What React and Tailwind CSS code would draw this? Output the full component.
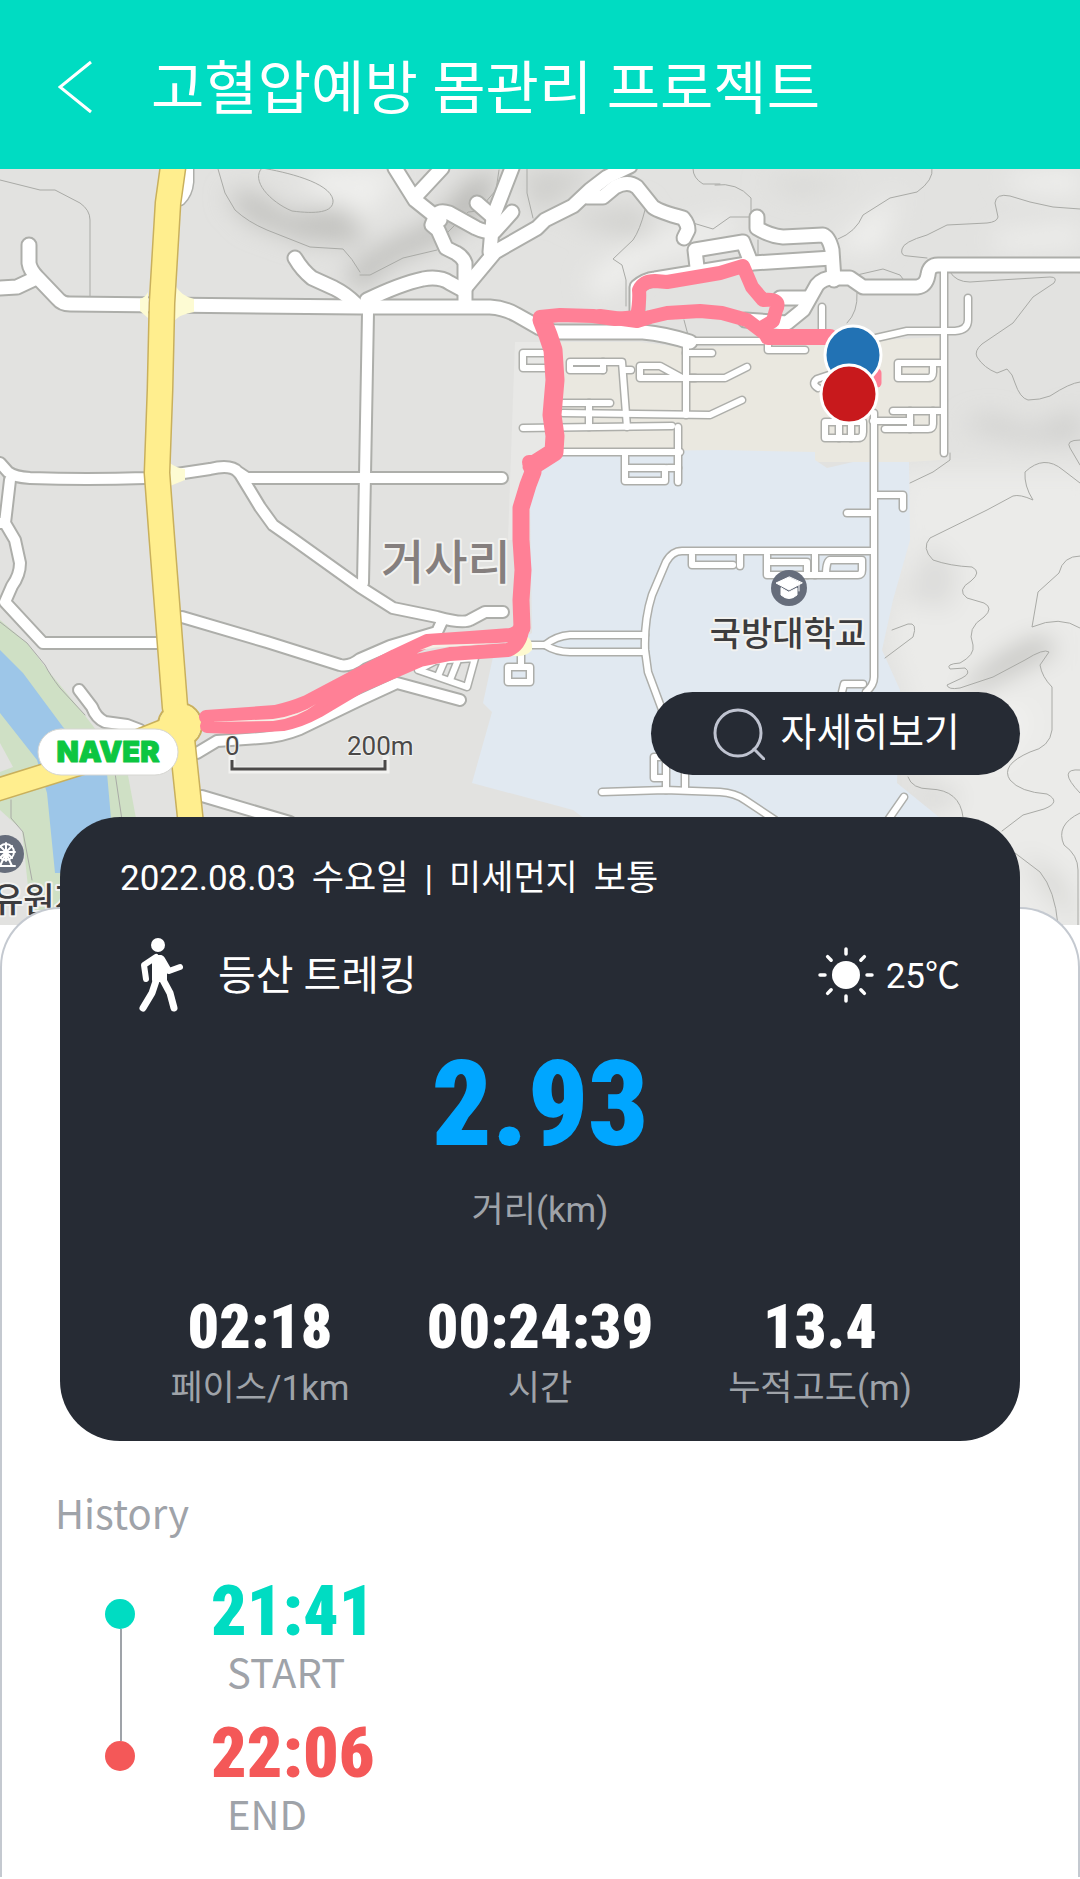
import React from 'react';

const STATS = [
  { value: '02:18', label: '페이스/1km' },
  { value: '00:24:39', label: '시간' },
  { value: '13.4', label: '누적고도(m)' },
];

// Wide streets
const STREETS = [
  'M0 288L17 287L34 279',
  'M29 245V263Q30 270 37 277L58 299Q62 304 70 304L360 307H490Q505 308 517 315L540 328Q548 332 560 332H643Q665 334 690 342',
  'M295 258Q302 270 312 278L334 288Q346 294 356 304',
  'M367 300Q400 284 423 279Q440 276 450 283L463 290',
  'M395 168L415 200L440 220',
  'M415 197L442 168',
  'M512 168L493 217L490 252',
  'M477 203L493 217',
  'M465 303V263Q463 257 456 253L446 248L438 230L432 225L436 215Q440 210 449 213L476 228Q484 232 494 232L512 212',
  'M465 288L495 252L537 228L545 220L573 206L590 190L607 177L630 166',
  'M587 197H603L615 187Q628 180 637 187L653 207Q660 212 683 218Q688 224 688 230L684 238',
  'M697 267L695 250L743 242L750 260',
  'M637 315V287Q645 280 655 279L753 263L832 258',
  'M757 217V228Q770 236 783 237L823 235Q829 237 832 250L834 280',
  'M745 320L787 323L803 310L817 285Q823 278 833 278H850L863 287H917Q926 286 928 275Q929 265 938 265H1080',
  'M780 298H807',
];

// Town streets of a medium width
const ROADS = [
  'M0 463L8 472Q14 477 30 478Q87 480 145 478L170 475L210 469Q231 464 238 472L247 478H502',
  'M240 474L260 507L273 525L293 539L360 587L393 608L437 617Q463 624 470 620L485 612H503',
  'M368 313L363 583',
  'M10 480L5 523L15 540L20 563Q20 575 12 586L5 602L43 643H157',
  'M0 523H5',
  'M182 617L267 642L340 665Q350 667 360 659L390 646L437 632L443 619',
  'M79 690L92 707Q96 718 105 722L127 725L140 730',
  'M197 753L217 741L260 738Q280 737 300 729L360 700L397 683L460 700',
  'M202 796L290 822',
];

// Service lanes inside the estate and the campus
const LANES = [
  'M690 341H770', 'M944 268V453',
  'M876 338L907 331H955Q968 330 968 320V298',
  'M943 363H898V378H928Q933 378 933 372V363', 'M893 411H943', 'M873 421H910', 'M885 429H928Q933 429 933 424V411', 'M910 411V429',
  'M874 413V677Q874 685 866 692', 'M877 495H903V508', 'M847 513H873',
  'M825 422V438H858Q863 438 863 432V422H825', 'M839 422V438', 'M851 422V438',
  'M832 374L817 379Q811 384 818 388', 'M822 307V332', 'M768 342V350H805',
  'M690 378H725L747 367', 'M563 413L710 415L742 400',
  'M545 353H523V368H545', 'M603 370H570V362H622L627 427', 'M603 370V362', 'M625 370H631',
  'M680 378H640V366H660L682 378H695', 'M686 340V415', 'M686 353H712', 'M563 403H610', 'M589 403V427',
  'M523 428L672 426', 'M558 452H680', 'M678 427V482', 'M625 453V481H665V468H628',
  'M668 468H678',
  'M530 645H545Q556 636 570 635H645', 'M545 645Q556 652 570 652H645',
  'M872 551H682Q672 551 666 562L652 595Q644 620 645 650L648 672L664 715',
  'M692 555V565H733', 'M740 553V566', 'M767 555V575H807V562H770', 'M815 553V575', 'M807 575H858Q862 575 862 570V560H830Q826 561 826 575',
  'M842 692L844 684H863', 'M508 667H530V682H508Z', 'M521 655V666',
  'M602 792L665 790L720 792Q735 793 745 800L775 820', 'M666 790V757H654V778H666', 'M685 770V790', 'M904 797L888 820',
  'M418 670L467 687L475 658L435 661Z', 'M444 662L438 676', 'M458 660L450 680',
];

// Contour lines and foot paths in the hills
const CONTOURS = [
  'M0 180L40 190H55L80 203Q90 210 90 220V296',
  'M218 169L225 193L235 210Q248 222 267 230L310 247L343 249Q352 258 360 272',
  'M262 168C250 180 270 202 292 211C315 214 334 213 333 200C330 182 285 172 262 168',
  'M360 275H370L403 258L437 250',
  'M527 168V193L533 218', 'M645 210Q640 230 633 240L613 259L622 265L626 280V306',
  'M693 169Q693 178 703 184L720 184', 'M715 185Q737 182 751 198V220', 'M693 223L713 229L730 217H750', 'M758 240V255',
  'M499 170L496 190L478 211L468 212L447 233', 'M684 320L688 335',
  'M932 168Q934 180 917 192L890 198L863 215Q856 232 838 239',
  'M1080 209L1053 207L1030 202L1010 196Q996 193 995 203L998 217Q997 222 987 223L947 225L927 235Q903 242 902 249Q900 256 908 256L927 258',
  'M857 275L883 269L900 275L903 279', 'M857 293Q858 312 847 323',
  'M950 272Q956 282 970 282L1000 280L1050 277Q1058 277 1054 283L1033 297L1013 323L982 344Q974 351 977 357Q984 368 997 373L1007 369Q1013 374 1015 383Q1020 398 1028 400Q1040 400 1050 396Q1070 383 1080 382',
  'M1080 483L1063 470Q1044 454 1025 472Q1024 486 1033 500Q1020 494 1013 496L987 510L930 538Q921 548 933 560Q950 566 972 567Q982 572 971 581Q956 590 967 598L984 603Q994 608 984 617Q966 628 973 645Q975 655 960 663Q945 664 950 669L965 668Q972 673 962 678L947 685Q948 690 960 688L993 677L1025 660Q1044 648 1049 652L1040 665Q1042 677 1052 687V730Q1050 747 1030 752Q1000 765 1010 780Q1020 792 1047 794Q1062 802 1044 809L1023 815L1002 831',
  'M1080 556Q1063 556 1059 573L1038 592L1032 627Q1060 615 1080 628',
  'M892 630L908 624Q918 622 913 637L885 658', 'M908 777Q912 789 930 789Q960 790 963 817',
  'M1015 853L1040 872Q1055 890 1058 925', 'M1080 813Q1055 825 1064 845Q1078 855 1078 870V925',
  'M1080 770Q1056 768 1080 793', 'M1080 440Q1065 440 1070 448L1080 465', 'M950 453V460L933 472L910 483',
  'M11 800V818L23 832L32 880', 'M115 773L122 820', 'M0 622L27 643L45 665Q50 675 60 688L85 715',
];

function WalkIcon() {
  return (
    <svg className="h-[76px] w-12" viewBox="0 0 48 76" fill="none" stroke="#fff" strokeLinecap="round" strokeLinejoin="round" aria-hidden="true">
      <circle cx="20" cy="8" r="7" fill="#fff" stroke="none" />
      <path d="M18 20H23L27 27V43H16V24Z" fill="#fff" strokeWidth="4" />
      <path d="M18 20L6 28L8 42" strokeWidth="6" />
      <path d="M24 22L31 34L42 30" strokeWidth="6" />
      <path d="M18 44L14 56L5 71" strokeWidth="7" />
      <path d="M25 43L32 56L36 71" strokeWidth="7" />
    </svg>
  );
}

function SunIcon() {
  return (
    <svg className="h-14 w-14" viewBox="-28 -28 56 56" aria-hidden="true">
      <circle r="14" fill="#fff" />
      {[0, 45, 90, 135, 180, 225, 270, 315].map((a) => (
        <path key={a} d="M0 -21V-26" stroke="#fff" strokeWidth="3.5" strokeLinecap="round" transform={`rotate(${a})`} />
      ))}
    </svg>
  );
}

function RouteMap() {
  return (
    <svg
      className="block h-full w-full"
      viewBox="0 169 1080 756"
      preserveAspectRatio="xMidYMin slice"
      fill="none"
      strokeLinecap="round"
      strokeLinejoin="round"
      role="img"
      aria-label="거사리 등산 경로 지도"
    >
      <defs>
        <filter id="soft" x="-50%" y="-50%" width="200%" height="200%">
          <feGaussianBlur stdDeviation="12" />
        </filter>
      </defs>
      <rect y="168" width="1080" height="757" fill="#e2e2e0" />

      {/* Hill shading */}
      <g filter="url(#soft)">
        <path d="M900 470H1100V940H880L940 800L890 640Z" fill="#ebebe9" />
        <path d="M300 170L400 168L370 215L345 235Z" fill="#efefed" />
        <path d="M225 195L250 190L290 215L340 205L360 220V245L300 240L250 222Z" fill="#c2c2bf" />
        <path d="M345 275L385 245L430 225L470 180L500 170L480 215L430 245L390 262L360 290Z" fill="#b9b9b6" />
        <path d="M520 170H600L560 200L535 215Z" fill="#cfcfcc" />
        <path d="M560 215L640 205L660 245L600 230Z" fill="#d2d2cf" />
        <path d="M585 280L640 240L740 215L720 240L650 260L600 300Z" fill="#f0f0ee" />
        <path d="M830 250L870 215L900 190L880 250Z" fill="#f0f0ee" />
        <path d="M760 180H860L800 195Z" fill="#d5d5d2" />
        <path d="M1000 175L1080 170V195L1020 190Z" fill="#f0f0ee" />
        <path d="M990 235L1080 225V245L1000 250Z" fill="#efefed" />
        <path d="M960 425L990 415L1030 430L1080 410V440L1020 440Z" fill="#cfcfcd" />
        <path d="M930 540L960 570L950 610L900 600Z" fill="#dddddb" />
        <path d="M1000 655L1040 635L1060 650L1000 680L960 700L970 680Z" fill="#c4c4c1" />
        <path d="M920 790L960 795L950 805Z" fill="#c0c0bd" />
        <path d="M1020 850L1060 880L1080 930L1040 880Z" fill="#cfcfcc" />
        <path d="M1000 700L1030 720L1000 760L970 750Z" fill="#f3f3f1" />
      </g>
      <path d="M515 342H562V452L530 480V540H508Z" fill="#e8e8e6" />

      {/* Estate, campus, river bank and river */}
      <path d="M560 342H640L687 348L880 340L940 337V460L909 462H820L560 455Z" fill="#eae8e0" />
      <path d="M557 452L720 450L815 452V460L827 468L853 462H909L910 540L893 600L882 650L900 690L897 783L945 822V830H600L573 810L472 783L492 712L483 703L493 657L532 633L530 500L542 468Z" fill="#e1e9f1" />
      <path d="M0 620L27 643L50 673L83 713L127 770L140 840V925H32L22 830L0 810Z" fill="#cfe0c5" />
      <path d="M0 743L13 767L0 772Z" fill="#e2e2e0" />
      <path d="M0 650L23 673L63 727L107 773L112 830V873H55L47 793L37 760L0 713Z" fill="#9dc6e8" />

      <g stroke="#a9aaa6" strokeWidth="1">
        {CONTOURS.map((d) => <path key={d} d={d} />)}
      </g>

      <g stroke="#adaeaa">
        <g strokeWidth="9">{LANES.map((d) => <path key={d} d={d} />)}</g>
        <g strokeWidth="14">{ROADS.map((d) => <path key={d} d={d} />)}</g>
        <g strokeWidth="17">{STREETS.map((d) => <path key={d} d={d} />)}</g>
        <path d="M188 168V182Q187 193 180 200" strokeWidth="13" />
      </g>
      <g stroke="#fff">
        <g strokeWidth="6">{LANES.map((d) => <path key={d} d={d} />)}</g>
        <g strokeWidth="10">{ROADS.map((d) => <path key={d} d={d} />)}</g>
        <g strokeWidth="13">{STREETS.map((d) => <path key={d} d={d} />)}</g>
        <path d="M188 168V182Q187 193 180 200" strokeWidth="10" />
      </g>

      {/* Junction flares and the highway */}
      <path d="M175 285Q181 296 194 299V312Q180 314 173 322ZM148 292Q146 297 140 299V311L148 318ZM170 463Q176 468 185 469V480L170 486ZM510 655Q530 650 532 643V650Q526 657 515 656Z" fill="#fdfbd3" />
      <circle cx="522" cy="645" r="10" fill="#fdf9cf" />
      <g stroke="#c9b05c">
        <path d="M-10 792L80 764L165 730" strokeWidth="24" />
        <path d="M174 160L168 203L162 303L160 390L157 473L162 540L175 707L181 730L191 825" strokeWidth="27" />
        <circle cx="180" cy="725" r="22" strokeWidth="2" />
      </g>
      <g stroke="#ffee8e">
        <path d="M-10 792L80 764L165 730" strokeWidth="21" />
        <path d="M174 160L168 203L162 303L160 390L157 473L162 540L175 707L181 730L191 825" strokeWidth="24" />
      </g>
      <circle cx="180" cy="725" r="21" fill="#ffee8e" />

      {/* Walked route */}
      <g stroke="#ff8096">
        <path strokeWidth="14" d="M206 717L235 715L275 712Q290 709 307 702L360 674L395 656L427 641L470 638L510 635Q518 633 520 628" />
        <path strokeWidth="14" d="M207 726L235 727L283 724Q300 721 318 711L360 686L420 660L450 654L508 650Q520 645 522 630" />
        <path strokeWidth="15" d="M305 708L410 654" />
        <path strokeWidth="17" d="M522 628L521 600L523 570L521 540V508L528 485L533 472" />
        <path strokeWidth="19" d="M532 466L554 452L555 436L552 415L555 380L553 350L548 335L542 320" />
        <path strokeWidth="14" d="M529 462H536M540 317L560 315L593 316L615 319L637 317Q640 300 639 290Q643 281 655 281L667 282L720 273L743 266L752 287L763 300Q782 298 776 310L773 321L763 327" />
        <path strokeWidth="14" d="M600 316L637 321L650 317L667 313L700 311L722 313L747 320L768 336L800 338" />
        <path strokeWidth="16" d="M768 337L800 337L830 337" />
        <path strokeWidth="9" d="M877 373V383" />
      </g>
      <path d="M211 722L273 719Q300 715 316 704Q298 718 273 721ZM420 650L433 645L500 643L433 648Z" fill="#f6efe6" />
      <g stroke="#fff" strokeWidth="3">
        <ellipse cx="853" cy="355" rx="28" ry="29" fill="#2272b4" />
        <ellipse cx="849" cy="394" rx="28" ry="29" fill="#c8191c" />
      </g>

      {/* Places */}
      <circle cx="789" cy="588" r="18" fill="#666d7b" />
      <path d="M789 577L776 583L789 590L802 583ZM781 588V595Q789 602 797 595V588L789 592ZM799 585V591" fill="#fff" stroke="#fff" strokeWidth="1" />
      <circle cx="5" cy="854" r="19" fill="#666d7b" />
      <g stroke="#fff" strokeWidth="2">
        <circle cx="6" cy="852" r="8" />
        <path d="M-3 852H15M6 843V861M0 846L12 858M12 846L0 858M6 853L0 866H12ZM-3 866H15" />
      </g>
      <g className="font-['Noto_Sans_CJK_KR',sans-serif]" stroke="#f2f2f0" strokeWidth="4" paintOrder="stroke">
        <text x="381" y="579" className="text-[47px] font-medium" fill="#857f7e">거사리</text>
        <text x="788" y="646" textAnchor="middle" className="text-[34px] font-medium" fill="#3c3c3e">국방대학교</text>
        <text x="-8" y="912" className="text-[34px] font-medium" fill="#3c3c3e">유원지</text>
      </g>

      {/* Map provider and scale */}
      <rect x="38" y="729" width="140" height="46" rx="23" fill="#fff" stroke="#d6d6d2" strokeWidth="1" />
      <text x="108" y="762" textAnchor="middle" className="font-['Inter',sans-serif] text-[29px] font-black" fill="#0cc641" stroke="#0cc641" strokeWidth="1">NAVER</text>
      <path d="M232 759V770H386V759" stroke="#f2f2f0" strokeWidth="7" strokeLinecap="square" strokeLinejoin="miter" />
      <path d="M232 760V769H385V760" stroke="#4b4948" strokeWidth="3" strokeLinecap="butt" strokeLinejoin="miter" />
      <g className="font-['Roboto',sans-serif] text-[26px]" fill="#4b4948" stroke="#f2f2f0" strokeWidth="2" paintOrder="stroke">
        <text x="225" y="755">0</text>
        <text x="347" y="755">200m</text>
      </g>
    </svg>
  );
}

function Event({ time, label, dot, color }) {
  return (
    <li className="flex items-start gap-[76px]">
      <span className={`mt-6 h-[30px] w-[30px] shrink-0 rounded-full ${dot}`} />
      <div className="flex flex-col">
        <time className={`font-['Roboto_Condensed','Roboto',sans-serif] text-[70px] leading-[72px] font-black ${color}`}>{time}</time>
        <span className="pl-4 text-[40px] leading-[48px] text-[#9fa3a9]">{label}</span>
      </div>
    </li>
  );
}

export default function App() {
  return (
    <div className="min-h-screen bg-white font-['Roboto','Noto_Sans_CJK_KR',sans-serif]">
      <header className="flex h-[169px] items-center gap-[58px] bg-[#00dcc2] px-[58px]">
        <button type="button" aria-label="뒤로" className="pt-1">
          <svg className="h-[54px] w-[35px]" viewBox="0 0 35 54" fill="none" stroke="#fff" strokeWidth="3">
            <path d="M33 2L2 27L33 52" />
          </svg>
        </button>
        <h1 className="pt-2 text-[58px] leading-none text-white">고혈압예방 몸관리 프로젝트</h1>
      </header>

      <section className="relative h-[756px] overflow-hidden">
        <RouteMap />
        <button
          type="button"
          className="absolute right-[60px] bottom-[150px] flex h-[83px] items-center gap-4 rounded-full bg-[#262b34] pr-[60px] pl-[62px] text-[39px] text-white"
        >
          <svg className="h-[52px] w-[52px]" viewBox="0 0 52 52" fill="none" stroke="#bfc3d0" strokeWidth="3" strokeLinecap="round" aria-hidden="true">
            <circle cx="25" cy="25" r="23" />
            <path d="M41 41L51 51" />
          </svg>
          자세히보기
        </button>
      </section>

      <main className="relative -mt-[18px] rounded-t-[60px] border-2 border-b-0 border-[#c4c9d0] bg-white pb-10">
        <section className="mx-[58px] -mt-[92px] rounded-[60px] bg-[#262b34] px-[60px] pt-9 pb-[26px] text-white">
          <p className="flex gap-4 text-[35px] leading-[52px]">
            <span>2022.08.03</span>
            <span>수요일</span>
            <span>|</span>
            <span>미세먼지</span>
            <span>보통</span>
          </p>
          <div className="mt-8 flex items-center justify-between">
            <div className="flex items-center gap-8 pl-[18px]">
              <WalkIcon />
              <h2 className="pt-1 text-[41px]">등산 트레킹</h2>
            </div>
            <div className="flex items-center gap-3 text-[35px]">
              <SunIcon />
              <span className="pt-1">25℃</span>
            </div>
          </div>
          <div className="mt-8 flex flex-col items-center">
            <strong className="font-['Roboto_Condensed','Roboto',sans-serif] text-[118px] leading-[120px] font-black text-[#00a6ff]">2.93</strong>
            <span className="mt-5 text-[35px] leading-[52px] text-[#9fa3a9]">거리(km)</span>
          </div>
          <dl className="mt-[54px] grid grid-cols-3">
            {STATS.map((s) => (
              <div key={s.label} className="flex flex-col-reverse items-center">
                <dt className="text-[35px] leading-[52px] whitespace-nowrap text-[#9fa3a9]">{s.label}</dt>
                <dd className="font-['Roboto_Condensed','Roboto',sans-serif] text-[62px] leading-[72px] font-black">{s.value}</dd>
              </div>
            ))}
          </dl>
        </section>

        <section className="px-[53px] pt-11 font-['Noto_Sans_CJK_KR',sans-serif]">
          <h2 className="text-[40px] leading-[54px] text-[#9fa3a9]">History</h2>
          <ol className="relative mt-9 flex flex-col gap-[22px] pl-[50px]">
            <li aria-hidden="true" className="absolute top-[54px] left-[65px] h-[112px] w-[2px] bg-[#9fa3a9]" />
            <Event time="21:41" label="START" dot="bg-[#00dcc2]" color="text-[#00dcc2]" />
            <Event time="22:06" label="END" dot="bg-[#f45858]" color="text-[#f45858]" />
          </ol>
        </section>
      </main>
    </div>
  );
}
